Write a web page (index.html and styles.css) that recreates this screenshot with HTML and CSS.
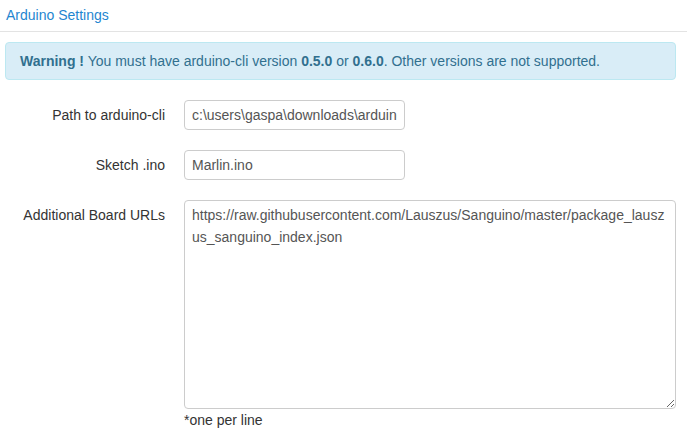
FILE: index.html
```html
<!DOCTYPE html>
<html>
<head>
<meta charset="utf-8">
<link rel="stylesheet" href="styles.css">
</head>
<body>
<div class="header">Arduino Settings</div>
<div class="body">
  <div class="alert"><strong>Warning !</strong> You must have arduino-cli version <strong>0.5.0</strong> or <strong>0.6.0</strong>. Other versions are not supported.</div>
  <form class="form">
    <label class="label">Path to arduino-cli</label>
    <div class="field"><input class="input" type="text" value="c:\users\gaspa\downloads\arduino-cli.exe"></div>
    <label class="label">Sketch .ino</label>
    <div class="field"><input class="input" type="text" value="Marlin.ino"></div>
    <label class="label label-area">Additional Board URLs</label>
    <div class="field">
      <textarea class="textarea">https://raw.githubusercontent.com/Lauszus/Sanguino/master/package_lauszus_sanguino_index.json</textarea>
      <div class="help">*one per line</div>
    </div>
  </form>
</div>
</body>
</html>
```
FILE: styles.css
```css
html, body {
  margin: 0;
  padding: 0;
  background: #fff;
}
body {
  font-family: "Liberation Sans", Arial, sans-serif;
  font-size: 14px;
  line-height: 20px;
  color: #333;
}
.header {
  padding: 5px 6px 6px;
  color: #1f86d0;
  border-bottom: 1px solid #e3e3e3;
}
.body {
  padding: 10px 11px 0 5px;
}
.alert {
  background: #d9edf7;
  border: 1px solid #bce8f1;
  color: #31708f;
  border-radius: 4px;
  padding: 8px 14px;
}
.form {
  margin-top: 20px;
  display: grid;
  grid-template-columns: 160px 1fr;
  column-gap: 19px;
  row-gap: 20px;
  align-items: start;
}
.label {
  text-align: right;
  padding-top: 5px;
}
.label-area {
  padding-top: 5px;
}
.input {
  box-sizing: border-box;
  width: 221px;
  height: 30px;
  border: 1px solid #ccc;
  border-radius: 4px;
  padding: 4px 7px;
  font-family: "Liberation Sans", Arial, sans-serif;
  font-size: 14px;
  color: #555;
  outline: none;
  display: block;
}
.textarea {
  box-sizing: border-box;
  display: block;
  width: 100%;
  height: 209px;
  border: 1px solid #ccc;
  border-radius: 4px;
  padding: 3px 7px 6px;
  font-family: "Liberation Sans", Arial, sans-serif;
  font-size: 14px;
  line-height: 22px;
  color: #555;
  outline: none;
  margin: 0;
  resize: vertical;
}
.help {
  margin-top: 1px;
  color: #333;
}
```
